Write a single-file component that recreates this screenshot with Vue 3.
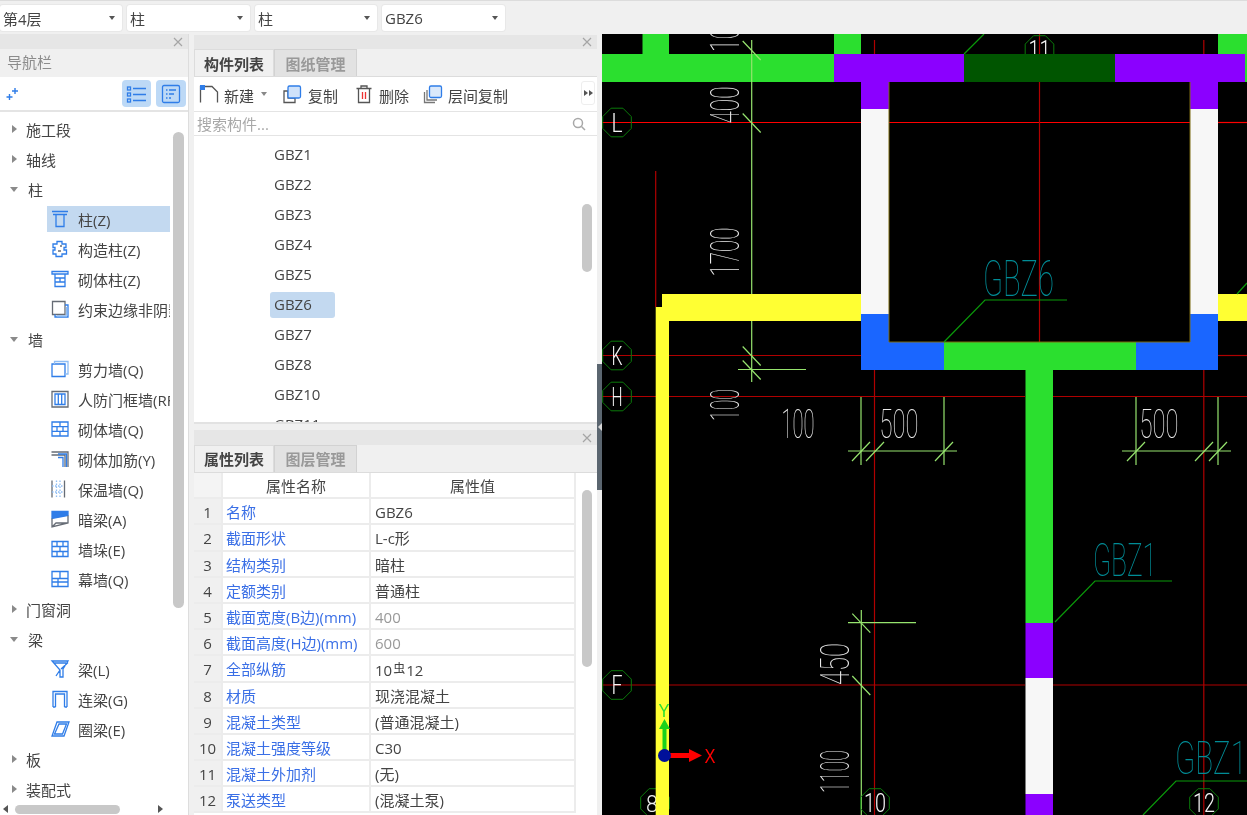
<script setup>
const B = '#2f7de8'
const G = '#666c75'
const LB = '#8fbdf3'
const icons = {
  col: [{ d: 'M2 2.5H18M3 5.5H17M6 6V17.5H14V6', s: B }],
  gz: [{ d: 'M7 2.5H12V5H16V8.5H14V11H16.5V15H12V17.5H6V15H3V11H5V8.5H3V5H7Z', s: B }, { d: 'M10 7H12M8 12H11', s: G }],
  qt: [{ d: 'M2 2.5H18V5H2ZM5 5V17.5H15V5M5 9H15M5 13H15M10 9V13', s: B }],
  ys: [{ d: 'M2.5 2.5H15V15.5H2.5Z', s: G }, { d: 'M15 6H18V18H5V15.5', s: B }, { d: 'M7 17H17M16.5 8V16', s: LB }],
  jl: [{ d: 'M2 5H15V17.5H2Z', s: B }, { d: 'M4.5 5V2.5H18V15H15', s: LB }],
  rf: [{ d: 'M2 2.5H18V18H2Z', s: G }, { d: 'M5 5H15V15.5H5ZM8.3 5V15.5M11.7 5V15.5', s: B }],
  qq: [{ d: 'M2 3H18V17H2ZM2 7.7H18M2 12.3H18M10 3V7.7M7 7.7V12.3M13 7.7V12.3M10 12.3V17', s: B }],
  jj: [{ d: 'M1.5 3H18V18M1.5 6H15V18', s: G }, { d: 'M8 8.5H13V18M8 5H16.5V18', s: B }],
  bw: [{ d: 'M2 1.5V18.5M14.5 1.5V18.5', s: G }, { d: 'M6.5 1.5V18.5M10 1.5V18.5M2 7H14M2 13H14', s: LB, dash: '1.5 1.5' }],
  al: [{ d: 'M2 9.5V2.5H18V6.5Z', s: B, f: B }, { d: 'M2 9.5V18L18 14V6.5M2 18L6 14H18', s: G }],
  qd: [{ d: 'M2 2.5H18V17.5H2ZM2 7.5H18M2 12.5H18M7 2.5V7.5M13 2.5V7.5M10 7.5V12.5M7 12.5V17.5M13 12.5V17.5', s: B }],
  mq: [{ d: 'M2 2.5H18V17.5H2ZM2 9.5H18M10 2.5V9.5M2 13H18M8 9.5V17.5', s: B }],
  l: [{ d: 'M2 2H18L13 10V18H10V11L2 2ZM3.5 4H16M11 10L18 3.5M10 11L6 17', s: B }],
  ll: [{ d: 'M3 18V2.5H17V18M5.5 18V5H14.5V18M3 18H5.5M14.5 18H17', s: B }],
  ql: [{ d: 'M7 3H19L14 17H2ZM9 5H16.5L12.5 15H4.5Z', s: B }],
}
const tree = [
  { t: '施工段', arrow: 'r' }, { t: '轴线', arrow: 'r' }, { t: '柱', arrow: 'd' },
  { t: '柱(Z)', i: 'col', sel: true }, { t: '构造柱(Z)', i: 'gz' }, { t: '砌体柱(Z)', i: 'qt' }, { t: '约束边缘非阴影', i: 'ys' },
  { t: '墙', arrow: 'd' },
  { t: '剪力墙(Q)', i: 'jl' }, { t: '人防门框墙(RF)', i: 'rf' }, { t: '砌体墙(Q)', i: 'qq' }, { t: '砌体加筋(Y)', i: 'jj' },
  { t: '保温墙(Q)', i: 'bw' }, { t: '暗梁(A)', i: 'al' }, { t: '墙垛(E)', i: 'qd' }, { t: '幕墙(Q)', i: 'mq' },
  { t: '门窗洞', arrow: 'r' }, { t: '梁', arrow: 'd' },
  { t: '梁(L)', i: 'l' }, { t: '连梁(G)', i: 'll' }, { t: '圈梁(E)', i: 'ql' },
  { t: '板', arrow: 'r' }, { t: '装配式', arrow: 'r' },
]
const selects = [{ t: '第4层', w: 122 }, { t: '柱', w: 123 }, { t: '柱', w: 122 }, { t: 'GBZ6', w: 123 }]
const parts = ['GBZ1', 'GBZ2', 'GBZ3', 'GBZ4', 'GBZ5', 'GBZ6', 'GBZ7', 'GBZ8', 'GBZ10', 'GBZ11']
const props = [
  { k: '名称', v: 'GBZ6' }, { k: '截面形状', v: 'L-c形' }, { k: '结构类别', v: '暗柱' }, { k: '定额类别', v: '普通柱' },
  { k: '截面宽度(B边)(mm)', v: '400', muted: true }, { k: '截面高度(H边)(mm)', v: '600', muted: true },
  { k: '全部纵筋', v: '10', bar: '虫', tail: '12' }, { k: '材质', v: '现浇混凝土' },
  { k: '混凝土类型', v: '(普通混凝土)' }, { k: '混凝土强度等级', v: 'C30' }, { k: '混凝土外加剂', v: '(无)' }, { k: '泵送类型', v: '(混凝土泵)' },
]

const GREEN = '#2bdf2f'; const PUR = '#8b00ff'; const WHITE = '#f7f7f7'; const BLUE = '#1a66ff'; const YEL = '#ffff33'
const rects = [
  [642.5, 34, 26.5, 20, GREEN], [834, 34, 27, 20, GREEN], [1218, 34, 29, 20, GREEN],
  [602, 54, 232, 28, GREEN], [834, 54, 130, 28, PUR], [964, 54, 151, 28, '#005500'], [1115, 54, 130, 28, PUR], [1245, 54, 2, 28, GREEN],
  [861, 82, 28, 27, PUR], [1190, 82, 28, 27, PUR],
  [861, 109, 28, 205, WHITE], [1190, 109, 28, 205, WHITE],
  [662, 294, 199, 27, YEL], [1218, 294, 29, 27, YEL], [655.7, 307, 13.3, 508, YEL],
  [861, 314, 28, 56, BLUE], [1190, 314, 28, 56, BLUE], [861, 342, 83, 28, BLUE], [1136, 342, 82, 28, BLUE],
  [944, 342, 192, 28, GREEN], [1025.5, 370, 27.5, 253, GREEN],
  [1025.5, 623, 27.5, 55, PUR], [1025.5, 678, 27.5, 116, WHITE], [1025.5, 794, 27.5, 21, PUR],
]
const RED = '#ff0000'; const DRED = '#b00000'; const DIM = '#96e46e'
const lines = [
  [602, 122.5, 861, 122.5, RED], [889, 122.5, 1190, 122.5, RED], [1218, 122.5, 1247, 122.5, RED],
  [602, 355.5, 861, 355.5, DRED], [1218, 355.5, 1247, 355.5, DRED],
  [602, 396.5, 1025, 396.5, DRED], [1053, 396.5, 1247, 396.5, DRED],
  [602, 685, 1025, 685, DRED], [1053, 685, 1247, 685, DRED],
  [1039.5, 34, 1039.5, 54, DRED], [1039.5, 82, 1039.5, 342, DRED],
  [874.5, 40, 874.5, 54, DRED], [874.5, 370, 874.5, 815, DRED], [1203.8, 40, 1203.8, 54, DRED], [1203.8, 370, 1203.8, 815, DRED],
  [655.7, 171, 655.7, 307, DRED],
  [751.7, 40, 751.7, 294, DIM], [751.7, 321, 751.7, 382, DIM], [738, 369.5, 806, 369.5, DIM],
  [848, 451, 957, 451, DIM], [861, 397, 861, 465, DIM], [944, 397, 944, 465, DIM],
  [1122, 451, 1231, 451, DIM], [1136, 397, 1136, 465, DIM], [1218, 397, 1218, 465, DIM],
  [861.3, 610, 861.3, 815, DIM], [848, 622.7, 916, 622.7, DIM],
]
const ticksBack = [[751.7, 50], [751.7, 122.5], [751.7, 355.5], [751.7, 369.5], [861.3, 622.7], [861.3, 685]]
const ticksFwd = [[861, 451], [875, 451], [944, 451], [1136, 451], [1204, 451], [1218, 451]]
const leaders = ['944,342 985,300 1067,300', '1055,622 1095,581 1172,581', '1143,815 1176,781 1247,781', '964,54 984,34', '1237,294 1247,283']
const octagon = (cx, cy) => {
  const r = 15.5
  return Array.from({ length: 8 }, (_, i) => {
    const a = Math.PI / 8 + (i * Math.PI) / 4
    return `${(cx + r * Math.cos(a)).toFixed(1)},${(cy + r * Math.sin(a)).toFixed(1)}`
  }).join(' ')
}
const bubbles = [
  { t: 'L', x: 617, y: 122.5 }, { t: 'K', x: 617, y: 355.5 }, { t: 'H', x: 617, y: 396.5 }, { t: 'F', x: 617, y: 685 },
  { t: '11', x: 1039.5, y: 50 }, { t: '8', x: 655, y: 803, back: true }, { t: '10', x: 875, y: 803 }, { t: '12', x: 1204, y: 803 },
]
const WT = '#eaeaea'; const CY = '#008c96'
const labels = [
  { t: '100', x: 739, y: 33, w: 38, s: 40, r: -90, c: WT }, { t: '400', x: 739, y: 105, w: 37, s: 40, r: -90, c: WT },
  { t: '1700', x: 739, y: 252, w: 49, s: 40, r: -90, c: WT }, { t: '100', x: 739, y: 405, w: 32, s: 40, r: -90, c: WT },
  { t: '450', x: 849, y: 664, w: 42, s: 40, r: -90, c: WT }, { t: '1100', x: 849, y: 771.5, w: 43, s: 40, r: -90, c: WT },
  { t: '100', x: 798, y: 438, w: 33, s: 40, r: 0, c: WT }, { t: '500', x: 899, y: 438, w: 39, s: 40, r: 0, c: WT }, { t: '500', x: 1159, y: 438, w: 39, s: 40, r: 0, c: WT },
  { t: 'GBZ6', x: 1018.5, y: 296, w: 71, s: 50, r: 0, c: CY }, { t: 'GBZ1', x: 1125, y: 576, w: 64, s: 47, r: 0, c: CY }, { t: 'GBZ17', x: 1219, y: 774, w: 88, s: 47, r: 0, c: CY },
]
</script>

<template>
  <div class="app">
    <div class="topbar">
      <div v-for="(s, i) in selects" :key="i" class="select" :style="{ width: s.w + 'px' }">
        <span>{{ s.t }}</span><i class="caret"></i>
      </div>
    </div>
    <div class="main">
      <aside class="nav">
        <div class="grip"><svg class="close" viewBox="0 0 10 10"><path d="M1 1L9 9M9 1L1 9" /></svg></div>
        <div class="navtitle">导航栏</div>
        <div class="navtools">
          <svg class="spark" width="14" height="14" viewBox="0 0 14 14"><path d="M9 1V7M6 4H12M3.5 7V13M.5 10H6.5" stroke="#2f7de8" stroke-width="1.4" fill="none" /></svg>
          <div class="toolbtn first">
            <svg width="22" height="20" viewBox="0 0 22 20"><g fill="none" stroke="#2f7de8" stroke-width="1.3"><rect x="1.5" y="3" width="3" height="3" /><rect x="1.5" y="9" width="3" height="3" /><rect x="1.5" y="15" width="3" height="3" /><path d="M7 4.5H20M7 10.5H20M7 16.5H20" /></g></svg>
          </div>
          <div class="toolbtn">
            <svg width="20" height="20" viewBox="0 0 20 20"><g fill="none" stroke="#2f7de8" stroke-width="1.3"><rect x="1.5" y="1.5" width="17" height="17" rx="1.5" /><path d="M5 6H6.5M8 6H15M5 10H6.5M8 10H13M5 14H6.5M8 14H10" /></g></svg>
          </div>
        </div>
        <div class="treewrap">
          <div class="tree">
            <div v-for="(n, i) in tree" :key="i" class="row">
              <template v-if="n.arrow">
                <i :class="n.arrow === 'r' ? 'tri-r' : 'tri-d'"></i>
                <span class="rowtext top">{{ n.t }}</span>
              </template>
              <div v-else class="child" :class="{ sel: n.sel }">
                <svg width="20" height="20" viewBox="0 0 20 20" class="ico">
                  <path v-for="(p, k) in icons[n.i]" :key="k" :d="p.d" :stroke="p.s" :fill="p.f || 'none'" :stroke-dasharray="p.dash" stroke-width="1.3" />
                </svg>
                <span class="rowtext">{{ n.t }}</span>
              </div>
            </div>
          </div>
          <div class="vthumb"></div>
        </div>
        <div class="hbar">
          <i class="hl"></i>
          <div class="hthumb"></div>
          <i class="hr"></i>
        </div>
      </aside>

      <section class="mid">
        <div class="panel listpanel">
          <div class="grip"><svg class="close" viewBox="0 0 10 10"><path d="M1 1L9 9M9 1L1 9" /></svg></div>
          <div class="tabs"><div class="tab on">构件列表</div><div class="tab">图纸管理</div></div>
          <div class="acts">
            <svg class="a1" width="20" height="20" viewBox="0 0 20 20"><path d="M1.5 18.5V2.5H13L18.5 8V18.5" fill="none" stroke="#555" stroke-width="1.3" /><rect x="1" y="1" width="5" height="5" fill="#2f7de8" /></svg>
            <span class="acttext">新建</span>
            <i class="caret gray"></i>
            <svg class="a2" width="20" height="20" viewBox="0 0 20 20"><path d="M2 7H6V14H13V18.5H2Z" fill="#fff" stroke="#555" stroke-width="1.3" /><rect x="6" y="2" width="12.5" height="12" rx="1.5" fill="#cfe2fa" stroke="#2f7de8" stroke-width="1.3" /></svg>
            <span class="acttext wide">复制</span>
            <svg class="a3" width="18" height="20" viewBox="0 0 18 20"><path d="M1.5 4.5H16.5M6 4.5V2H12V4.5M3.5 4.5V18.5H14.5V4.5" fill="none" stroke="#555" stroke-width="1.3" /><path d="M7.5 8V15M10.5 8V15" stroke="#e33" stroke-width="1.3" /></svg>
            <span class="acttext wide">删除</span>
            <svg class="a4" width="20" height="20" viewBox="0 0 20 20"><path d="M1.5 8V18.5H12M4 6V16H14" fill="none" stroke="#777" stroke-width="1.3" /><rect x="6.5" y="2" width="12" height="11.5" rx="1.5" fill="#dbe9fb" stroke="#2f7de8" stroke-width="1.3" /></svg>
            <span class="acttext">层间复制</span>
            <div class="more"><i></i><i></i></div>
          </div>
          <div class="search">
            <span>搜索构件...</span>
            <svg width="14" height="14" viewBox="0 0 14 14"><circle cx="6" cy="6" r="4.5" fill="none" stroke="#a8a8a8" stroke-width="1.5" /><path d="M9.5 9.5L13 13" stroke="#a8a8a8" stroke-width="1.5" /></svg>
          </div>
          <div class="list">
            <div v-for="p in parts" :key="p" class="item"><span :class="{ sel: p === 'GBZ6' }">{{ p }}</span></div>
            <div class="lthumb"></div>
          </div>
        </div>
        <div class="panel proppanel">
          <div class="grip"><svg class="close" viewBox="0 0 10 10"><path d="M1 1L9 9M9 1L1 9" /></svg></div>
          <div class="tabs"><div class="tab on">属性列表</div><div class="tab">图层管理</div></div>
          <div class="tablewrap">
            <div class="table">
              <div class="tr head"><div class="td n"></div><div class="td k">属性名称</div><div class="td v">属性值</div></div>
              <div v-for="(p, i) in props" :key="i" class="tr">
                <div class="td n">{{ i + 1 }}</div>
                <div class="td k blue">{{ p.k }}</div>
                <div class="td v" :class="{ muted: p.muted }">{{ p.v }}<span v-if="p.bar" class="rebar">{{ p.bar }}</span>{{ p.tail }}</div>
              </div>
            </div>
            <div class="pthumb"></div>
          </div>
        </div>
      </section>

      <div class="splitter"><div class="handle"><i></i></div></div>

      <svg class="canvas" viewBox="602 34 645 781" width="645" height="781">
        <rect x="602" y="34" width="645" height="781" fill="#000" />
        <g v-for="(b, i) in bubbles.filter(x => x.back)" :key="'b' + i">
          <polygon :points="octagon(b.x, b.y)" fill="none" stroke="#0a7a0a" />
          <text :x="b.x - 3" :y="b.y + 9" text-anchor="middle" class="bub" font-size="24" fill="#eee" textLength="12" lengthAdjust="spacingAndGlyphs">{{ b.t }}</text>
        </g>
        <line v-for="(l, i) in lines.slice(0, 16)" :key="'r' + i" :x1="l[0]" :y1="l[1]" :x2="l[2]" :y2="l[3]" :stroke="l[4]" stroke-width="1.2" />
        <rect v-for="(r, i) in rects" :key="i" :x="r[0]" :y="r[1]" :width="r[2]" :height="r[3]" :fill="r[4]" />
        <path d="M889 82V342H1190V82" fill="none" stroke="#7a6a10" stroke-width="1" />
        <line v-for="(l, i) in lines.slice(16)" :key="'d' + i" :x1="l[0]" :y1="l[1]" :x2="l[2]" :y2="l[3]" :stroke="l[4]" stroke-width="1.2" />
        <line v-for="(t, i) in ticksBack" :key="'tb' + i" :x1="t[0] - 9" :y1="t[1] - 9" :x2="t[0] + 9" :y2="t[1] + 10" :stroke="DIM" stroke-width="1.2" />
        <line v-for="(t, i) in ticksFwd" :key="'tf' + i" :x1="t[0] - 9" :y1="t[1] + 10" :x2="t[0] + 9" :y2="t[1] - 9" :stroke="DIM" stroke-width="1.2" />
        <polyline v-for="(p, i) in leaders" :key="'le' + i" :points="p" fill="none" stroke="#0a9a0a" stroke-width="1.2" />
        <g v-for="(b, i) in bubbles.filter(x => !x.back)" :key="'c' + i">
          <polygon :points="octagon(b.x, b.y)" fill="none" stroke="#0a7a0a" />
        </g>
        <text v-for="(b, i) in bubbles.filter(x => !x.back)" :key="'ct' + i" :x="b.x" :y="b.y + 9" text-anchor="middle" class="bub" font-size="25" fill="#f6f6f6" :textLength="b.t.length * 11" lengthAdjust="spacingAndGlyphs">{{ b.t }}</text>
        <rect x="964" y="54" width="151" height="28" fill="#005500" />
        <text v-for="(l, i) in labels" :key="'lb' + i" class="cad" text-anchor="middle" :font-size="l.s" :fill="l.c" :textLength="l.w" lengthAdjust="spacingAndGlyphs" :transform="`translate(${l.x} ${l.y}) rotate(${l.r})`">{{ l.t }}</text>
        <path d="M662.5 752V729H659L664.5 719L670 729H666.5V752Z" fill="#1bd11b" />
        <path d="M670 753H689V749L702 755.5L689 762V758H670Z" fill="#ff0000" />
        <circle cx="664.5" cy="755.5" r="6.5" fill="#00109a" />
        <text x="664" y="717" text-anchor="middle" class="axis" font-size="18" fill="#2bdf2f" textLength="11" lengthAdjust="spacingAndGlyphs">Y</text>
        <text x="710" y="763" text-anchor="middle" class="axis" font-size="20" fill="#ff0000" textLength="11" lengthAdjust="spacingAndGlyphs">X</text>
      </svg>
    </div>
  </div>
</template>

<style scoped>
.app {
  width: 1247px;
  height: 815px;
  overflow: hidden;
  display: flex;
  flex-direction: column;
  background: #f0f0f0;
  color: #444;
  font-family: "Open Sans", "Noto Sans CJK SC", sans-serif;
  font-size: 15px;
  filter: blur(0.35px);
}
.topbar {
  height: 34px;
  flex: none;
  box-sizing: border-box;
  border-top: 1px solid #dcdcdc;
  padding-top: 4px;
  display: flex;
  gap: 5px;
}
.select {
  box-sizing: border-box;
  height: 26px;
  background: #fff;
  border-radius: 3px;
  padding: 0 6px 0 3px;
  display: flex;
  align-items: center;
  justify-content: space-between;
  box-shadow: 0 0 0 1px #e8e8e8;
}
.caret {
  width: 0;
  height: 0;
  margin-right: 1px;
  border-left: 3.5px solid transparent;
  border-right: 3.5px solid transparent;
  border-top: 4px solid #555;
}
.caret.gray { border-top-color: #888; margin: 0 0 0 7px; }
.main {
  flex: 1;
  min-height: 0;
  display: flex;
}
.nav {
  width: 188px;
  flex: none;
  display: flex;
  flex-direction: column;
  border-right: 1px solid #ddd;
  box-sizing: content-box;
  margin-right: 5px;
}
.grip {
  height: 15px;
  flex: none;
  background: #e6e6e6;
  display: flex;
  justify-content: flex-end;
  align-items: center;
  padding-right: 5px;
}
.close { width: 10px; height: 10px; }
.close path { stroke: #a5a5a5; stroke-width: 1.2; fill: none; }
.navtitle {
  height: 28px;
  flex: none;
  line-height: 27px;
  padding-left: 7px;
  color: #8c8c8c;
}
.navtools {
  height: 35px;
  flex: none;
  box-sizing: border-box;
  background: #fff;
  border-bottom: 2px solid #e4e4e4;
  display: flex;
  align-items: center;
  padding-right: 2px;
  gap: 5px;
}
.spark { margin-left: 6px; margin-right: auto; }
.toolbtn {
  width: 30px;
  height: 27px;
  background: #bdd9f6;
  border-radius: 4px;
  display: flex;
  align-items: center;
  justify-content: center;
}
.toolbtn.first { width: 29px; }
.treewrap {
  flex: 1;
  min-height: 0;
  background: #fff;
  display: flex;
  overflow: hidden;
}
.tree {
  width: 170px;
  flex: none;
  padding-top: 2px;
  overflow: hidden;
}
.row {
  height: 30px;
  display: flex;
  align-items: center;
  white-space: nowrap;
  position: relative;
}
.tri-r {
  margin-left: 12px;
  width: 0;
  height: 0;
  border-top: 4px solid transparent;
  border-bottom: 4px solid transparent;
  border-left: 5px solid #8a8a8a;
}
.tri-d {
  margin-left: 10px;
  width: 0;
  height: 0;
  border-left: 4px solid transparent;
  border-right: 4px solid transparent;
  border-top: 5px solid #8a8a8a;
  margin-right: 1px;
}
.rowtext.top { margin-left: 9px; }
.child {
  margin-left: 47px;
  width: 123px;
  height: 26px;
  display: flex;
  align-items: center;
  overflow: hidden;
  flex: none;
}
.child.sel { background: #c3d9f0; }
.ico { margin-left: 3px; margin-right: 8px; flex: none; }
.vthumb {
  width: 11px;
  height: 476px;
  margin: 20px 0 0 3px;
  background: #c8c8c8;
  border-radius: 6px;
  flex: none;
}
.hbar {
  height: 12px;
  flex: none;
  background: #fff;
  display: flex;
  align-items: center;
  position: relative;
}
.hl, .hr {
  width: 0;
  height: 0;
  border-top: 4px solid transparent;
  border-bottom: 4px solid transparent;
}
.hl { margin-left: 3px; border-right: 5px solid #555; }
.hr { margin-left: 38px; border-left: 5px solid #555; }
.hthumb {
  width: 105px;
  height: 9px;
  margin-left: 7px;
  background: #c8c8c8;
  border-radius: 5px;
}
.mid {
  width: 403px;
  flex: none;
  display: flex;
  flex-direction: column;
  gap: 6px;
}
.panel { display: flex; flex-direction: column; min-height: 0; }
.listpanel { height: 390px; flex: none; }
.proppanel { flex: 1; }
.listpanel .grip { margin-top: 1px; height: 14px; }
.tabs {
  height: 28px;
  flex: none;
  display: flex;
  border-bottom: 1px solid #dcdcdc;
  box-sizing: border-box;
}
.tab {
  width: 83px;
  text-align: center;
  line-height: 28px;
  color: #999;
  font-weight: 700;
  background: #e2e2e2;
  border: 1px solid #d2d2d2;
  border-bottom: 0;
  box-sizing: border-box;
}
.tab.on { width: 80px; background: #f0f0f0; color: #444; border-color: #dcdcdc; }
.proppanel .tab { line-height: 26px; }
.acts {
  height: 34px;
  flex: none;
  box-sizing: border-box;
  background: #fff;
  display: flex;
  align-items: center;
  position: relative;
  padding-left: 5px;
}
.acttext { margin-left: 5px; padding-top: 2px; }
.acttext.wide { margin-left: 6px; }
.a2 { margin-left: 15px; }
.a3 { margin-left: 17px; }
.a4 { margin-left: 14px; }
.more {
  position: absolute;
  right: 2px;
  top: 4px;
  width: 14px;
  height: 24px;
  box-sizing: border-box;
  border: 1px solid #eee;
  border-radius: 3px;
  display: flex;
  align-items: center;
  justify-content: center;
  gap: 1px;
}
.more i {
  width: 0;
  height: 0;
  border-top: 3px solid transparent;
  border-bottom: 3px solid transparent;
  border-left: 4px solid #555;
}
.search {
  height: 25px;
  flex: none;
  box-sizing: border-box;
  background: #fff;
  border-top: 1px solid #e4e4e4;
  border-bottom: 1px solid #e4e4e4;
  padding: 0 11px 0 3px;
  display: flex;
  align-items: center;
  justify-content: space-between;
  color: #a8a8a8;
}
.list {
  flex: 1;
  min-height: 0;
  background: #fff;
  overflow: hidden;
  position: relative;
  border-bottom: 2px solid #e2e2e2;
  padding-top: 4px;
}
.item {
  height: 30px;
  display: flex;
  align-items: center;
  padding-left: 76px;
}
.item span {
  width: 65px;
  height: 26px;
  line-height: 24px;
  padding-left: 4px;
  box-sizing: border-box;
  border-radius: 3px;
}
.item span.sel { background: #c3d9f0; }
.lthumb {
  position: absolute;
  left: 388px;
  top: 68px;
  width: 10px;
  height: 68px;
  border-radius: 5px;
  background: #c8c8c8;
}
.tablewrap {
  flex: 1;
  min-height: 0;
  background: #fff;
  position: relative;
  overflow: hidden;
}
.table { width: 382px; }
.tr {
  display: grid;
  grid-template-columns: 29px 148px 205px;
  height: 26.2px;
  box-sizing: border-box;
  border-bottom: 2px solid #ececec;
}
.td {
  line-height: 26px;
  padding-left: 4px;
  border-right: 2px solid #ececec;
  white-space: nowrap;
  overflow: hidden;
  box-sizing: border-box;
}
.td.k { padding-left: 3px; }
.n { background: #f0f0f0; padding: 0; text-align: center; }
.head .td { background: #fff; text-align: center; padding: 0; }
.head .n { background: #f4f4f4; }
.blue { color: #3a6fe6; }
.muted { color: #999; }
.rebar {
  font-size: 12px;
  vertical-align: 3px;
  margin: 0 1px;
}
.pthumb {
  position: absolute;
  left: 388px;
  top: 17px;
  width: 10px;
  height: 177px;
  border-radius: 5px;
  background: #c8c8c8;
}
.splitter {
  width: 5px;
  flex: none;
  background: #f0f0f0;
  position: relative;
}
.handle {
  position: absolute;
  left: 0;
  top: 330px;
  width: 5px;
  height: 126px;
  background: #5b6670;
  display: flex;
  align-items: center;
  justify-content: center;
}
.handle i {
  width: 0;
  height: 0;
  border-top: 4px solid transparent;
  border-bottom: 4px solid transparent;
  border-right: 4px solid #d8d8d8;
}
.canvas { flex: none; display: block; }
.cad {
  font-family: Roboto, "Liberation Sans", sans-serif;
  font-weight: 100;
}
.bub {
  font-family: Roboto, "Liberation Sans", sans-serif;
  font-weight: 300;
}
.axis { font-family: "Liberation Sans", sans-serif; }
</style>
